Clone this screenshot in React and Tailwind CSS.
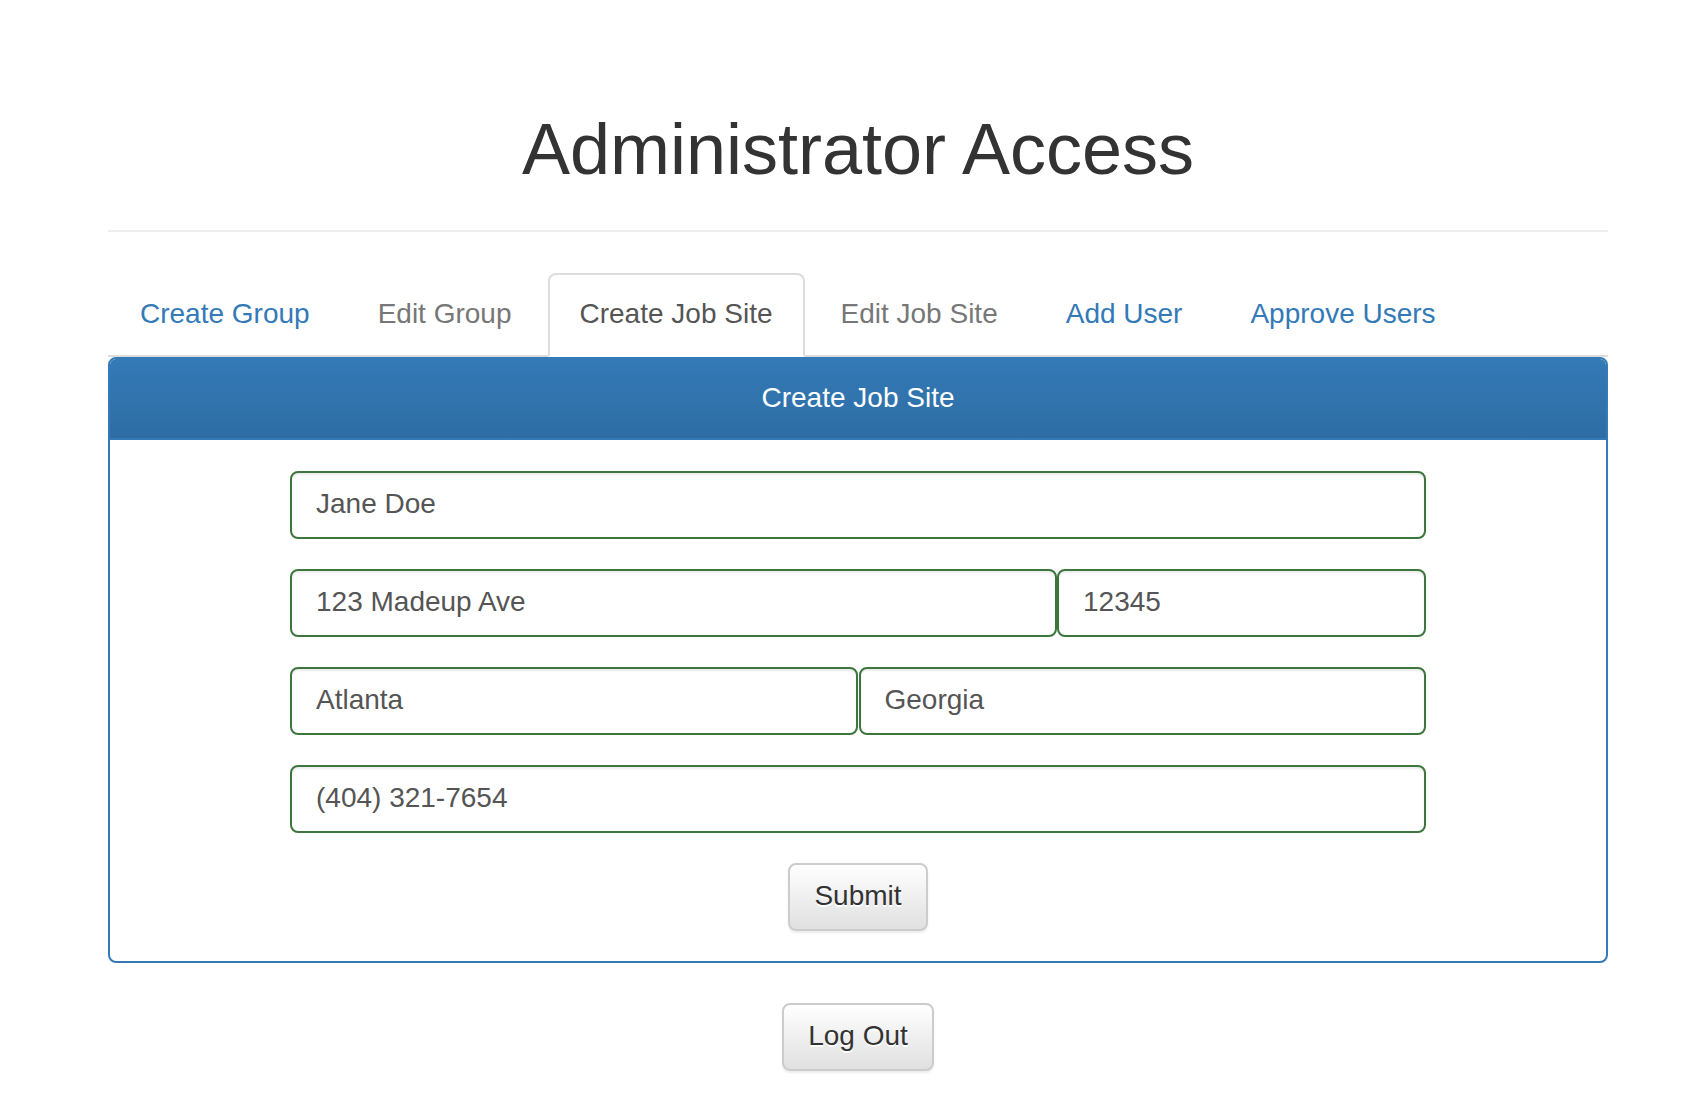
import React, { useState } from 'react';

const tabs = [
  { id: 'create-group', label: 'Create Group' },
  { id: 'edit-group', label: 'Edit Group', disabled: true },
  { id: 'create-site', label: 'Create Job Site' },
  { id: 'edit-site', label: 'Edit Job Site', disabled: true },
  { id: 'add-user', label: 'Add User' },
  { id: 'approve', label: 'Approve Users' },
];

const Field = ({ value, className = '' }) => (
  <input
    type="text"
    defaultValue={value}
    className={`h-[68px] min-w-0 rounded-[8px] border-2 border-[#3c763d] bg-white px-[24px] pt-[11px] pb-[13px] text-[28px] leading-[40px] text-[#555] shadow-[inset_0_2px_2px_rgba(0,0,0,0.075)] focus:outline-none ${className}`}
  />
);

const Button = ({ children, className = '' }) => (
  <button
    className={`h-[68px] rounded-[8px] border-2 border-[#ccc] bg-linear-to-b from-white to-[#e0e0e0] px-[24px] pt-[11px] pb-[13px] text-[28px] leading-[40px] text-[#333] shadow-[0_2px_2px_rgba(0,0,0,0.075)] [text-shadow:0_2px_0_#fff] ${className}`}
  >
    {children}
  </button>
);

const App = () => {
  const [activeTab, setActiveTab] = useState('create-site');

  return (
    <div className="min-h-screen bg-white font-['Liberation_Sans',Arial,sans-serif]">
      <div className="ml-[108px] w-[1500px]">
        {/* page header */}
        <div className="border-b-2 border-[#eee] pt-[110px] pb-[41px]">
          <h1 className="text-center text-[72px] leading-[79px] text-[#333]">Administrator Access</h1>
        </div>

        {/* tabs */}
        <ul className="mt-[41px] flex border-b-2 border-[#ddd]">
          {tabs.map((tab) => {
            const isActive = tab.id === activeTab;
            return (
              <li key={tab.id} className="-mb-[2px] mr-[4px]">
                <button
                  onClick={() => !tab.disabled && setActiveTab(tab.id)}
                  className={`block rounded-t-[8px] border-2 px-[30px] pt-[19px] pb-[21px] text-[28px] leading-[40px] ${
                    isActive
                      ? 'border-[#ddd] border-b-transparent bg-white text-[#555]'
                      : tab.disabled
                      ? 'border-transparent text-[#777]'
                      : 'border-transparent text-[#337ab7]'
                  }`}
                >
                  {tab.label}
                </button>
              </li>
            );
          })}
        </ul>

        {/* panel */}
        <div className="rounded-[8px] border-2 border-[#337ab7] bg-white">
          <div className="rounded-t-[6px] border-b-2 border-[#337ab7] bg-linear-to-b from-[#337ab7] to-[#2e6da4] pt-[19px] pb-[21px] text-center">
            <h3 className="text-[28px] leading-[39px] text-white">Create Job Site</h3>
          </div>
          <div className="pt-[31px] pb-[30px]">
            <div className="mx-auto flex w-[1136px] flex-col gap-[30px]">
              <Field value="Jane Doe" className="w-full" />
              <div className="flex">
                <Field value="123 Madeup Ave" className="w-[767px]" />
                <Field value="12345" className="flex-1" />
              </div>
              <div className="flex gap-[1px]">
                <Field value="Atlanta" className="flex-1" />
                <Field value="Georgia" className="flex-1" />
              </div>
              <Field value="(404) 321-7654" className="w-full" />
              <div className="flex justify-center">
                <Button>Submit</Button>
              </div>
            </div>
          </div>
        </div>

        <div className="mt-[40px] flex justify-center">
          <Button>Log Out</Button>
        </div>
      </div>
    </div>
  );
};

export default App;
